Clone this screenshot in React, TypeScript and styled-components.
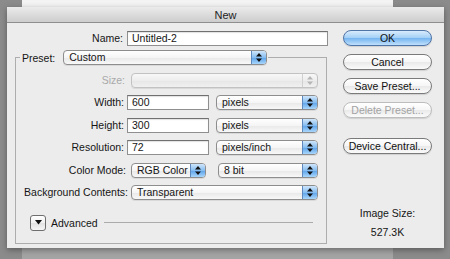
import React from 'react'
import styled, { createGlobalStyle, css } from 'styled-components'

const GlobalStyle = createGlobalStyle`
  html, body {
    margin: 0;
    padding: 0;
  }
  body {
    width: 450px;
    height: 259px;
    overflow: hidden;
    font-family: "Liberation Sans", Arial, sans-serif;
    font-size: 10.5px;
    color: #151515;
  }
`

const Desktop = styled.div`
  position: relative;
  width: 450px;
  height: 259px;
  background: #8b8b8b;
  overflow: hidden;
`

// the document window sitting behind the dialog
const BackWindow = styled.div`
  position: absolute;
  left: 22px;
  top: 0;
  width: 371px;
  height: 259px;
  background: linear-gradient(#f3f3f3 0 7px, #a4a4a4 7px);
`

const Dialog = styled.div`
  position: absolute;
  left: 7px;
  top: 7px;
  width: 437px;
  height: 241px;
  display: flex;
  flex-direction: column;
  background: #ececec;
  box-shadow: 0 2px 6px rgba(0, 0, 0, 0.35);
`

const TitleBar = styled.div`
  height: 15px;
  display: flex;
  align-items: center;
  justify-content: center;
  background: linear-gradient(#ebebeb, #cdcdcd);
  border-bottom: 1px solid #8e8e8e;
  color: #222;
  font-size: 11px;
`

const Body = styled.div`
  display: flex;
  gap: 16px;
  padding: 7px 12px 0 8px;
`

const LeftPane = styled.div`
  width: 312px;
  display: flex;
  flex-direction: column;
`

const NameRow = styled.div`
  display: grid;
  grid-template-columns: 108px 201px;
  column-gap: 4px;
  align-items: center;
  margin-top: 1px;
`

const Label = styled.div<{ $disabled?: boolean; $shift?: number }>`
  text-align: right;
  white-space: nowrap;
  line-height: 15px;
  color: ${p => (p.$disabled ? '#a9a9a9' : '#151515')};
  margin-right: ${p => -(p.$shift || 0)}px;
`

const TextField = styled.div<{ $w: number }>`
  width: ${p => p.$w}px;
  height: 15px;
  box-sizing: border-box;
  border: 1px solid #8f8f8f;
  border-top-color: #707070;
  background: #fff;
  box-shadow: inset 0 1px 1px rgba(0, 0, 0, 0.12);
  padding: 0 4px;
  line-height: 13px;
`

const Group = styled.fieldset`
  width: 312px;
  box-sizing: border-box;
  min-width: 0;
  margin: 4px 0 0;
  padding: 8px 0 12px 0;
  border: 1px solid #adadad;
`

const Legend = styled.legend`
  display: flex;
  align-items: center;
  gap: 8px;
  height: 15px;
  margin-left: 4px;
  padding: 0 1px 0 2px;
`

const FormGrid = styled.div`
  display: grid;
  grid-template-columns: 108px 191px;
  column-gap: 3px;
  row-gap: 7.4px;
  align-items: center;
`

const Controls = styled.div<{ $gap?: number }>`
  display: flex;
  align-items: center;
  gap: ${p => p.$gap || 0}px;
`

const PopupBox = styled.div<{ $w: number; $off?: number; $disabled?: boolean }>`
  display: flex;
  width: ${p => p.$w}px;
  height: 15px;
  box-sizing: border-box;
  margin-left: ${p => p.$off || 0}px;
  border: 1px solid ${p => (p.$disabled ? '#c2c2c2' : '#8d8d8d')};
  border-radius: 4px;
  overflow: hidden;
  background: ${p =>
    p.$disabled
      ? 'linear-gradient(#f7f7f7, #ededed 50%, #e6e6e6 51%, #f0f0f0)'
      : 'linear-gradient(#ffffff, #f5f5f5 50%, #e8e8e8 51%, #f8f8f8)'};
  box-shadow: 0 1px 0 rgba(0, 0, 0, 0.08);
`

const PopupText = styled.div`
  flex: 1;
  padding-left: 5px;
  line-height: 13px;
  white-space: nowrap;
  overflow: hidden;
`

const Stepper = styled.div<{ $disabled?: boolean }>`
  width: 14px;
  display: flex;
  align-items: center;
  justify-content: center;
  border-left: 1px solid ${p => (p.$disabled ? '#d0d0d0' : '#5d88bd')};
  ${p =>
    p.$disabled
      ? css`
          background: transparent;
        `
      : css`
          background: linear-gradient(#cfe6fb, #86bdf1 50%, #5ba2ea 51%, #a9d6fb);
        `}
`

const AdvancedRow = styled.div`
  display: flex;
  align-items: center;
  margin-top: 15px;
  padding: 0 13px 0 14px;
`

const Disclosure = styled.div`
  width: 16px;
  height: 16px;
  box-sizing: border-box;
  display: flex;
  align-items: center;
  justify-content: center;
  border: 1px solid #6e6e6e;
  border-radius: 3px;
  background: linear-gradient(#ffffff, #f0f0f0 50%, #e2e2e2 51%, #f6f6f6);
`

const AdvancedLabel = styled.span`
  margin-left: 5px;
`

const Rule = styled.div`
  flex: 1;
  margin-left: 6px;
  border-top: 1px solid #ababab;
`

const RightPane = styled.div`
  width: 89px;
  display: flex;
  flex-direction: column;
  gap: 8px;
`

const Button = styled.div<{ $primary?: boolean; $disabled?: boolean; $top?: number }>`
  height: 16px;
  box-sizing: border-box;
  display: flex;
  align-items: center;
  justify-content: center;
  margin-top: ${p => p.$top || 0}px;
  border-radius: 8px;
  border: 1px solid ${p => (p.$primary ? '#4f74a6' : p.$disabled ? '#bdbdbd' : '#7a7a7a')};
  color: ${p => (p.$disabled ? '#a3a3a3' : '#111')};
  background: ${p =>
    p.$primary
      ? 'linear-gradient(#d8ebfc, #a2cff6 50%, #74b4f0 51%, #bfe0fc)'
      : 'linear-gradient(#ffffff, #f6f6f6 50%, #e9e9e9 51%, #fbfbfb)'};
  box-shadow: 0 1px 1px rgba(0, 0, 0, 0.12);
`

const SizeInfo = styled.div`
  margin-top: 45px;
  text-align: center;
  line-height: 13px;
`

const SizeValue = styled.div`
  margin-top: 6px;
`

const Arrows = ({ disabled }: { disabled?: boolean }) => (
  <svg width="6" height="9" viewBox="0 0 6 9">
    <path d="M3 0 L6 3.4 L0 3.4 Z M3 9 L6 5.6 L0 5.6 Z" fill={disabled ? '#b5b5b5' : '#111'} />
  </svg>
)

const Popup = ({ w, off, value, disabled }: { w: number; off?: number; value?: string; disabled?: boolean }) => (
  <PopupBox $w={w} $off={off} $disabled={disabled}>
    <PopupText>{value}</PopupText>
    <Stepper $disabled={disabled}>
      <Arrows disabled={disabled} />
    </Stepper>
  </PopupBox>
)

export default function App() {
  return (
    <>
      <GlobalStyle />
      <Desktop>
        <BackWindow />
        <Dialog>
          <TitleBar>New</TitleBar>
          <Body>
            <LeftPane>
              <NameRow>
                <Label>Name:</Label>
                <TextField $w={201}>Untitled-2</TextField>
              </NameRow>

              <Group>
                <Legend>
                  <span>Preset:</span>
                  <Popup w={204} value="Custom" />
                </Legend>

                <FormGrid>
                  <Label $disabled $shift={1}>Size:</Label>
                  <Popup w={187} off={4} disabled />

                  <Label>Width:</Label>
                  <Controls $gap={7}>
                    <TextField $w={82}>600</TextField>
                    <Popup w={102} value="pixels" />
                  </Controls>

                  <Label>Height:</Label>
                  <Controls $gap={7}>
                    <TextField $w={82}>300</TextField>
                    <Popup w={102} value="pixels" />
                  </Controls>

                  <Label>Resolution:</Label>
                  <Controls $gap={7}>
                    <TextField $w={82}>72</TextField>
                    <Popup w={102} value="pixels/inch" />
                  </Controls>

                  <Label $shift={2}>Color Mode:</Label>
                  <Controls $gap={12}>
                    <Popup w={75} off={4} value="RGB Color" />
                    <Popup w={100} value="8 bit" />
                  </Controls>

                  <Label $shift={4}>Background Contents:</Label>
                  <Popup w={187} off={4} value="Transparent" />
                </FormGrid>

                <AdvancedRow>
                  <Disclosure>
                    <svg width="7" height="5" viewBox="0 0 7 5">
                      <path d="M0 0 L7 0 L3.5 4.5 Z" fill="#111" />
                    </svg>
                  </Disclosure>
                  <AdvancedLabel>Advanced</AdvancedLabel>
                  <Rule />
                </AdvancedRow>
              </Group>
            </LeftPane>

            <RightPane>
              <Button $primary>OK</Button>
              <Button>Cancel</Button>
              <Button>Save Preset...</Button>
              <Button $disabled>Delete Preset...</Button>
              <Button $top={12}>Device Central...</Button>
              <SizeInfo>
                <div>Image Size:</div>
                <SizeValue>527.3K</SizeValue>
              </SizeInfo>
            </RightPane>
          </Body>
        </Dialog>
      </Desktop>
    </>
  )
}
